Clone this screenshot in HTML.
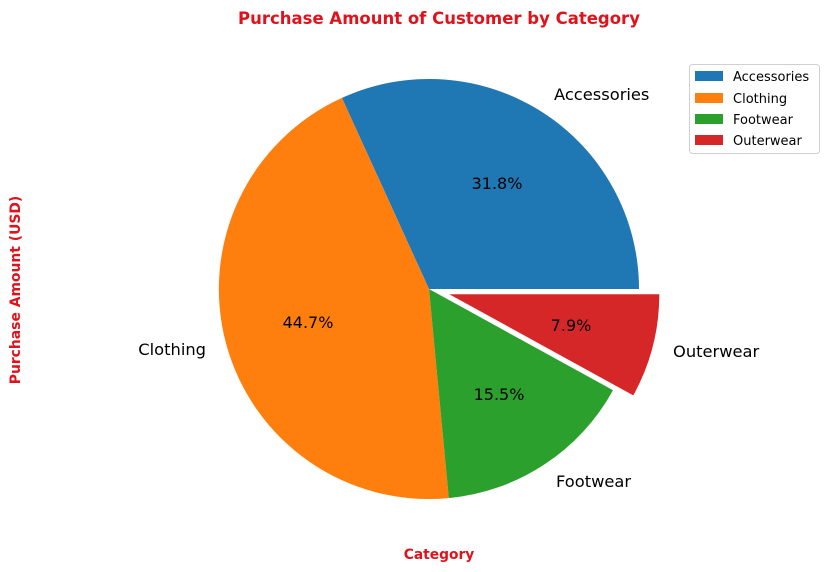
<!DOCTYPE html>
<html><head><meta charset="utf-8"><style>
html,body{margin:0;padding:0;background:#fff;}
svg{display:block;font-family:"DejaVu Sans","Liberation Sans",sans-serif;}
</style></head><body>
<svg width="836" height="572" viewBox="0 0 836 572" xmlns="http://www.w3.org/2000/svg">
<rect width="836" height="572" fill="#fff"/>
<text x="439" y="24" text-anchor="middle" font-size="16.5" font-weight="bold" fill="#e0121b">Purchase Amount of Customer by Category</text>
<path d="M429,289 L639,289 A210,210 0 0 0 341.9,97.9 Z" fill="#1f77b4"/>
<path d="M429,289 L341.9,97.9 A210,210 0 0 0 448.8,498.1 Z" fill="#ff7f0e"/>
<path d="M429,289 L448.8,498.1 A210,210 0 0 0 613,390.2 Z" fill="#2ca02c"/>
<path d="M449.3,294.2 L633.3,395.4 A210,210 0 0 0 659.3,294.2 Z" fill="#d62728"/>
<g font-size="16.3" fill="#000">
<text x="554" y="100">Accessories</text>
<text x="206" y="355" text-anchor="end">Clothing</text>
<text x="556" y="487">Footwear</text>
<text x="673" y="357">Outerwear</text>
</g>
<g font-size="16" fill="#000" text-anchor="middle">
<text x="497" y="189">31.8%</text>
<text x="308" y="328">44.7%</text>
<text x="499" y="400">15.5%</text>
<text x="571" y="331">7.9%</text>
</g>
<text x="439" y="559" text-anchor="middle" font-size="13.8" font-weight="bold" fill="#e0121b">Category</text>
<text transform="translate(20,290) rotate(-90)" text-anchor="middle" font-size="13.9" font-weight="bold" fill="#e0121b">Purchase Amount (USD)</text>
<rect x="689.5" y="64.5" width="130" height="89" rx="3" fill="#fff" stroke="#d0d0d0"/>
<g font-size="13" fill="#000">
<rect x="695" y="71" width="28" height="10" fill="#1f77b4"/><text x="733" y="81">Accessories</text>
<rect x="695" y="93" width="28" height="10" fill="#ff7f0e"/><text x="733" y="103">Clothing</text>
<rect x="695" y="114" width="28" height="10" fill="#2ca02c"/><text x="733" y="124">Footwear</text>
<rect x="695" y="135" width="28" height="10" fill="#d62728"/><text x="733" y="145">Outerwear</text>
</g>
</svg>
</body></html>
